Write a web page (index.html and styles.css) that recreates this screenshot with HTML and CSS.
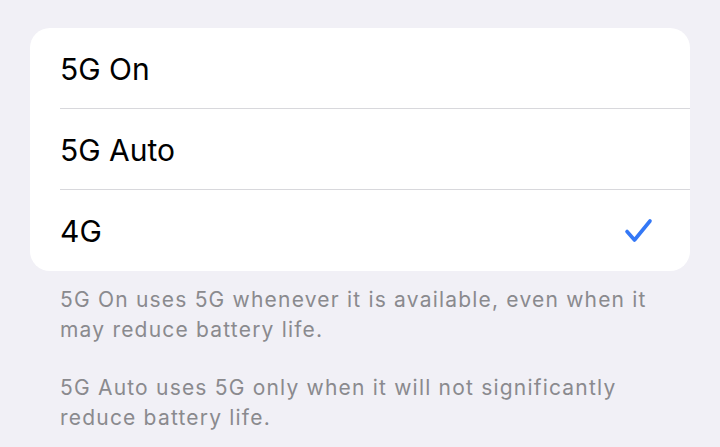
FILE: index.html
```html
<!DOCTYPE html>
<html lang="en">
<head>
    <meta charset="UTF-8">
    <title>Voice &amp; Data</title>
    <link rel="stylesheet" href="styles.css">
</head>
<body>
    <div class="grupo">
        <div class="linha">
            <span class="rotulo">5G On</span>
        </div>
        <div class="linha">
            <span class="rotulo">5G Auto</span>
        </div>
        <div class="linha">
            <span class="rotulo">4G</span>
            <svg class="check" width="30" height="26" viewBox="0 0 30 26">
                <path d="M3 13.5 L10.5 22 L26 3" fill="none" stroke="#3478f6" stroke-width="3.6" stroke-linecap="round" stroke-linejoin="round"/>
            </svg>
        </div>
    </div>

    <div class="rodape">
        <p>5G On uses 5G whenever it is available, even when it may reduce battery life.</p>
        <p>5G Auto uses 5G only when it will not significantly reduce battery life.</p>
    </div>
</body>
</html>
```

FILE: styles.css
```css
body{
    margin: 0;
    background-color: #f1f0f6;
    font-family: Inter, "Liberation Sans", Arial, sans-serif;
    padding: 28px 30px 0 30px;
}

.grupo{
    background-color: #fff;
    border-radius: 20px;
    padding-left: 30px;
}

.linha{
    display: flex;
    align-items: center;
    height: 81px;
    padding-right: 36px;
    padding-top: 1px;
    border-bottom: solid 1px #d8d8dc;
    box-sizing: border-box;
}
.linha:last-child{
    border-bottom: none;
}

.rotulo{
    flex: 1;
    font-size: 30px;
    color: #000;
}

.check{
    display: block;
}

.rodape{
    padding: 14px 30px 0 30px;
    color: #8a8a8e;
    font-size: 21px;
    letter-spacing: 1.2px;
    line-height: 30px;
}
.rodape p{
    margin: 0 0 28px 0;
}
```
